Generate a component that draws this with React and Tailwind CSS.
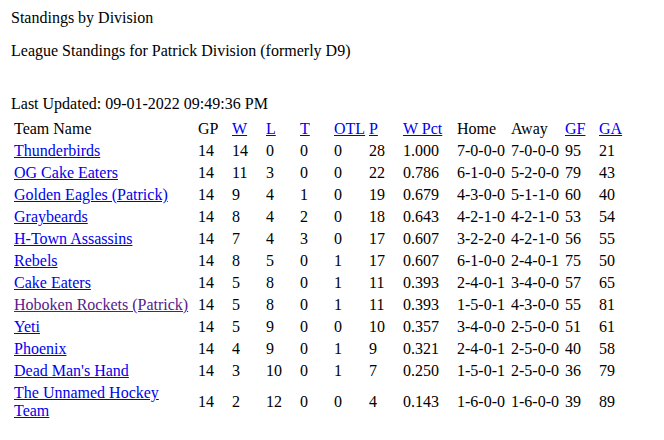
const teams = [
  ["Thunderbirds", 14, 14, 0, 0, 0, 28, "1.000", "7-0-0-0", "7-0-0-0", 95, 21],
  ["OG Cake Eaters", 14, 11, 3, 0, 0, 22, "0.786", "6-1-0-0", "5-2-0-0", 79, 43],
  ["Golden Eagles (Patrick)", 14, 9, 4, 1, 0, 19, "0.679", "4-3-0-0", "5-1-1-0", 60, 40],
  ["Graybeards", 14, 8, 4, 2, 0, 18, "0.643", "4-2-1-0", "4-2-1-0", 53, 54],
  ["H-Town Assassins", 14, 7, 4, 3, 0, 17, "0.607", "3-2-2-0", "4-2-1-0", 56, 55],
  ["Rebels", 14, 8, 5, 0, 1, 17, "0.607", "6-1-0-0", "2-4-0-1", 75, 50],
  ["Cake Eaters", 14, 5, 8, 0, 1, 11, "0.393", "2-4-0-1", "3-4-0-0", 57, 65],
  ["Hoboken Rockets (Patrick)", 14, 5, 8, 0, 1, 11, "0.393", "1-5-0-1", "4-3-0-0", 55, 81, true],
  ["Yeti", 14, 5, 9, 0, 0, 10, "0.357", "3-4-0-0", "2-5-0-0", 51, 61],
  ["Phoenix", 14, 4, 9, 0, 1, 9, "0.321", "2-4-0-1", "2-5-0-0", 40, 58],
  ["Dead Man's Hand", 14, 3, 10, 0, 1, 7, "0.250", "1-5-0-1", "2-5-0-0", 36, 79],
  ["The Unnamed Hockey Team", 14, 2, 12, 0, 0, 4, "0.143", "1-6-0-0", "1-6-0-0", 39, 89],
];

// header label, is link, width
const cols = [
  ["Team Name", false, "w-[182px]"],
  ["GP", false, "w-[32px]"],
  ["W", true, "w-[32px]"],
  ["L", true, "w-[32px]"],
  ["T", true, "w-[32px]"],
  ["OTL", true, "w-[33px]"],
  ["P", true, "w-[32px]"],
  ["W Pct", true, "w-[52px]"],
  ["Home", false, "w-[52px]"],
  ["Away", false, "w-[52px]"],
  ["GF", true, "w-[32px]"],
  ["GA", true, "w-[32px]"],
];

export default function App() {
  return (
    <div className="min-h-[440px] bg-white text-black pl-[11px] pt-[9px] text-[16px] leading-[18px] font-['Liberation_Serif','Times_New_Roman',serif]">
      <p>Standings by Division</p>
      <p className="mt-[15px]">League Standings for Patrick Division (formerly D9)</p>
      <p className="mt-[35px]">Last Updated: 09-01-2022 09:49:36 PM</p>
      <table className="mt-[4px] table-fixed border-separate border-spacing-[2px] w-[621px]">
        <thead>
          <tr>
            {cols.map(([label, link, w]) => (
              <th key={label} className={`${w} p-[1px] text-left font-normal align-middle`}>
                {link ? <a href="#" className="text-[#0000ee] underline">{label}</a> : label}
              </th>
            ))}
          </tr>
        </thead>
        <tbody>
          {teams.map((t) => (
            <tr key={t[0]}>
              <td className="p-[1px] align-middle">
                <a href="#" className={`underline ${t[12] ? "text-[#551a8b]" : "text-[#0000ee]"}`}>{t[0]}</a>
              </td>
              {t.slice(1, 12).map((v, i) => (
                <td key={i} className="p-[1px] align-middle whitespace-nowrap">{v}</td>
              ))}
            </tr>
          ))}
        </tbody>
      </table>
    </div>
  );
}
